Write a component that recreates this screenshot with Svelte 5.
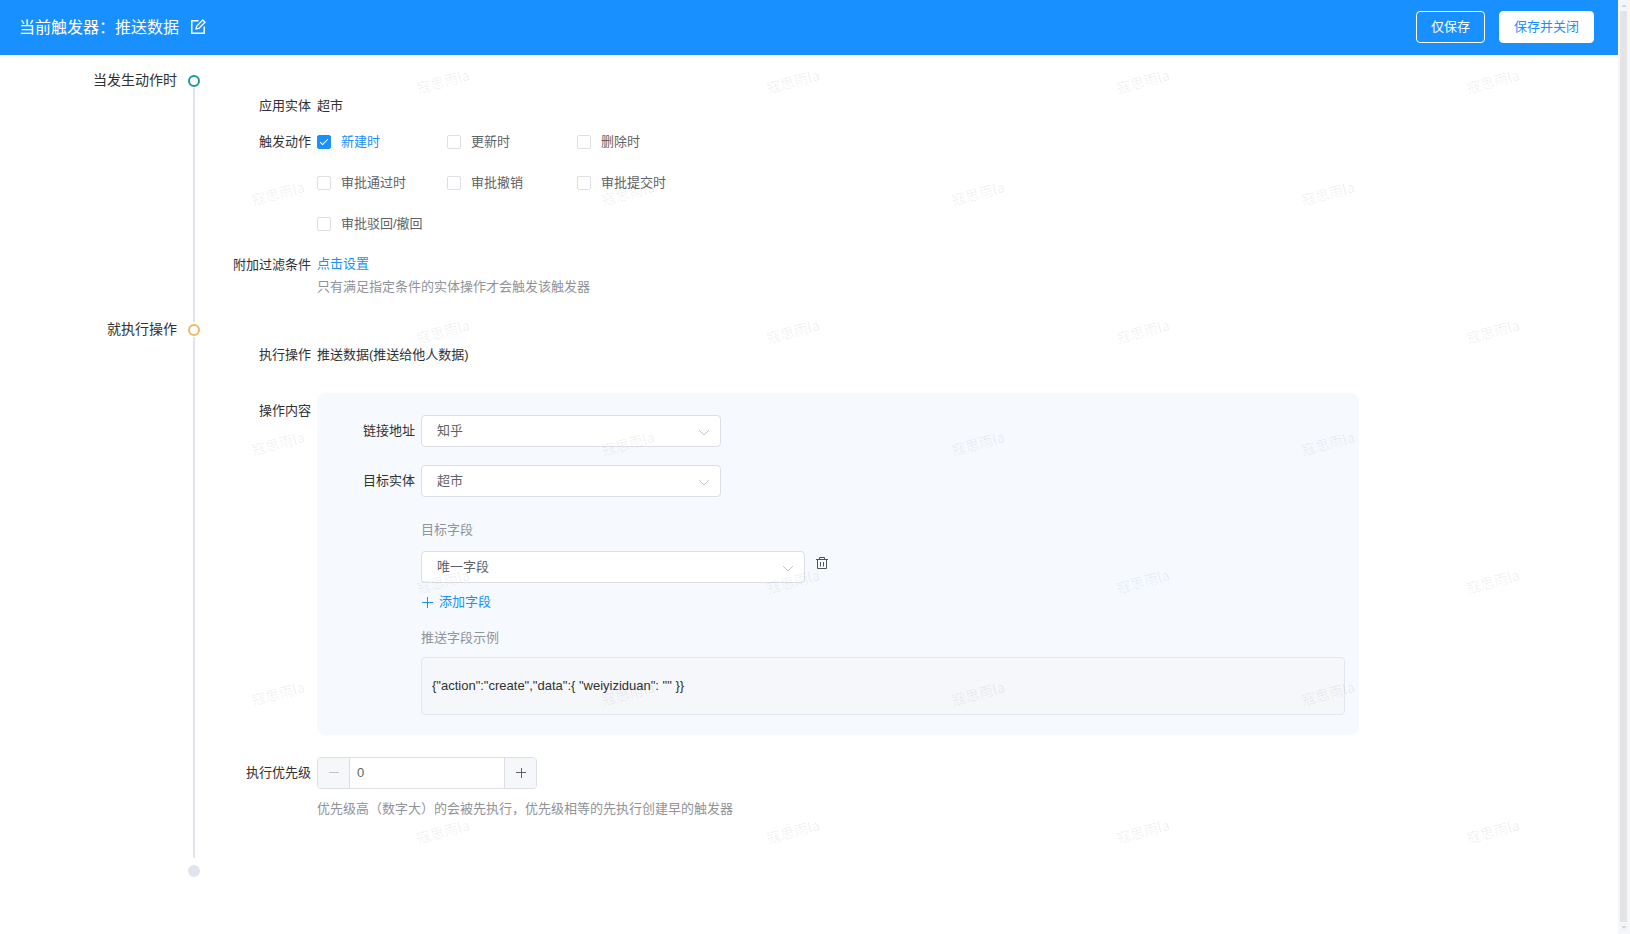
<script>
  let triggerName = "推送数据";
  let priority = 0;
  let linkUrl = "知乎";
  let targetEntity = "超市";
  let targetField = "唯一字段";

  let actions = [
    { label: "新建时", checked: true },
    { label: "更新时", checked: false },
    { label: "删除时", checked: false },
    { label: "审批通过时", checked: false },
    { label: "审批撤销", checked: false },
    { label: "审批提交时", checked: false },
    { label: "审批驳回/撤回", checked: false }
  ];

  // staggered marks, repeated every 350x250
  const marks = [];
  for (let row = 0; row < 7; row++) {
    const odd = row % 2;
    for (let col = 0; col < 4; col++) {
      marks.push({
        x: (odd ? 278 : 443) + col * 350,
        y: (odd ? 193 : 81) + Math.floor(row / 2) * 250
      });
    }
  }
</script>

<div class="page">
  <div class="content">
    <header class="header">
      <h1 class="title">当前触发器：{triggerName}</h1>
      <button class="icon-button edit" aria-label="编辑名称">
        <svg width="16" height="16" viewBox="0 0 16 16" fill="none" stroke="currentColor" stroke-width="1.5">
          <path d="M8.500 1.750H1.750v12.500h12.500V7.500" />
          <path d="M6 10l.6-2.800L12.800 1l2.200 2.200-6.200 6.200z" stroke-width="1.300" />
        </svg>
      </button>
      <div class="header-actions">
        <button class="button outline">仅保存</button>
        <button class="button">保存并关闭</button>
      </div>
    </header>

    <main class="steps">
      <section class="step">
        <h2 class="step-title">当发生动作时</h2>
        <div class="rail"><span class="dot teal"></span><span class="line"></span></div>
        <div class="step-body">
          <div class="row entity">
            <span class="label">应用实体</span>
            <span class="value">超市</span>
          </div>
          <div class="row actions" role="group" aria-labelledby="actions-label">
            <span class="label" id="actions-label">触发动作</span>
            <div class="checks">
              {#each actions as action}
                <label class="check">
                  <input type="checkbox" bind:checked={action.checked} />
                  <span>{action.label}</span>
                </label>
              {/each}
            </div>
          </div>
          <div class="row">
            <span class="label">附加过滤条件</span>
            <div>
              <a class="link filter" href="#filter">点击设置</a>
              <p class="hint">只有满足指定条件的实体操作才会触发该触发器</p>
            </div>
          </div>
        </div>
      </section>

      <section class="step">
        <h2 class="step-title">就执行操作</h2>
        <div class="rail"><span class="dot orange"></span><span class="line"></span></div>
        <div class="step-body last">
          <div class="row operation">
            <span class="label">执行操作</span>
            <span class="value">推送数据(推送给他人数据)</span>
          </div>
          <div class="row operation">
            <span class="label panel-label">操作内容</span>
            <div class="panel">
              <div class="row field">
                <label class="label" for="link-url">链接地址</label>
                <div class="select">
                  <select id="link-url" bind:value={linkUrl}>
                    <option>知乎</option>
                  </select>
                  <svg width="12" height="12" viewBox="0 0 12 12"><path d="M1 3l5 5 5-5" /></svg>
                </div>
              </div>
              <div class="row field">
                <label class="label" for="target-entity">目标实体</label>
                <div class="select">
                  <select id="target-entity" bind:value={targetEntity}>
                    <option>超市</option>
                  </select>
                  <svg width="12" height="12" viewBox="0 0 12 12"><path d="M1 3l5 5 5-5" /></svg>
                </div>
              </div>
              <div class="target">
                <label class="caption" for="target-field">目标字段</label>
                <div class="target-row">
                  <div class="select wide">
                    <select id="target-field" bind:value={targetField}>
                      <option>唯一字段</option>
                    </select>
                    <svg width="12" height="12" viewBox="0 0 12 12"><path d="M1 3l5 5 5-5" /></svg>
                  </div>
                  <button class="icon-button trash" aria-label="删除字段">
                    <svg width="12" height="13" viewBox="0 0 12 13" fill="none" stroke="currentColor">
                      <path d="M0 2.500h12M3.500 2.500v-2h5v2M1.500 2.500v9h9v-9M4.500 5v4.500M7.500 5v4.500" />
                    </svg>
                  </button>
                </div>
                <a class="link add" href="#add">
                  <svg width="12" height="12" viewBox="0 0 12 12" fill="none" stroke="currentColor"><path d="M1 6.500h11M6.500 1v11" /></svg>
                  添加字段
                </a>
                <p class="caption">推送字段示例</p>
                <pre class="example">{'{"action":"create","data":{ "weiyiziduan": "" }}'}</pre>
              </div>
            </div>
          </div>
          <div class="row">
            <label class="label" for="priority">执行优先级</label>
            <div>
              <div class="number">
                <button disabled={priority <= 0} on:click={() => priority--} aria-label="减少">
                  <svg width="12" height="12" viewBox="0 0 12 12"><path d="M1 5.500h10" /></svg>
                </button>
                <input id="priority" type="text" bind:value={priority} />
                <button on:click={() => priority++} aria-label="增加">
                  <svg width="12" height="12" viewBox="0 0 12 12"><path d="M1 5.500h10M6.500 1v10" /></svg>
                </button>
              </div>
              <p class="hint priority-hint">优先级高（数字大）的会被先执行，优先级相等的先执行创建早的触发器</p>
            </div>
          </div>
        </div>
      </section>

      <div class="step step-end">
        <span></span>
        <div class="rail"><span class="dot end"></span></div>
      </div>
    </main>
  </div>

  <div class="scrollbar">
    <svg width="6" height="3" viewBox="0 0 6 3"><path d="M0 3l3-3 3 3z" /></svg>
    <div class="thumb"></div>
    <svg width="6" height="3" viewBox="0 0 6 3"><path d="M0 0l3 3 3-3z" /></svg>
  </div>

  <div class="watermark" aria-hidden="true">
    {#each marks as mark}
      <span style="left: {mark.x}px; top: {mark.y}px">寇思雨la</span>
    {/each}
  </div>
</div>

<style>
  :global(body) {
    margin: 0;
    background: #fff;
  }
  .page {
    position: relative;
    display: flex;
    min-height: 100vh;
    font-family: "Liberation Sans", "Noto Sans CJK SC", sans-serif;
    font-size: 13px;
    color: #303133;
  }
  .page * {
    box-sizing: border-box;
  }
  .content {
    flex: 1;
    min-width: 0;
  }
  button,
  input,
  select {
    font: inherit;
    color: inherit;
  }
  p,
  pre,
  h1,
  h2 {
    margin: 0;
    font-weight: normal;
  }

  .header {
    display: flex;
    align-items: center;
    height: 55px;
    padding: 0 24px 2px 19px;
    background: #1890ff;
    color: #fff;
  }
  .title {
    padding-top: 2px;
    font-size: 16px;
    line-height: 24px;
  }
  .icon-button {
    display: flex;
    padding: 0;
    border: none;
    background: none;
    cursor: pointer;
  }
  .edit {
    margin-left: 11px;
  }
  .header-actions {
    display: flex;
    gap: 14px;
    margin-left: auto;
  }
  .button {
    height: 32px;
    padding: 0 14px 2px;
    border: 1px solid #fff;
    border-radius: 4px;
    background: #fff;
    color: #1890ff;
    cursor: pointer;
  }
  .button.outline {
    background: none;
    color: #fff;
  }

  .steps {
    padding: 20px 16% 0 0;
  }
  .step {
    display: grid;
    grid-template-columns: 177px 12px 1fr;
    column-gap: 11px;
  }
  .step-title {
    font-size: 14px;
    line-height: 10px;
    text-align: right;
  }
  .rail {
    display: flex;
    flex-direction: column;
    align-items: center;
  }
  .dot {
    width: 12px;
    height: 12px;
    border: 2px solid;
    border-radius: 50%;
  }
  .teal {
    border-color: #1a9a9a;
  }
  .orange {
    border-color: #f0b866;
  }
  .end {
    border-color: #dfe4ed;
    background: #dfe4ed;
  }
  .line {
    flex: 1;
    width: 2px;
    margin: 1px 0 2px;
    background: #dfe4ed;
  }
  .step-body {
    padding: 15px 0 29px;
    min-width: 0;
  }
  .step-body.last {
    padding-bottom: 43px;
  }
  .step-end {
    margin-top: 5px;
  }

  .row {
    display: flex;
  }
  .row > :last-child {
    min-width: 0;
  }
  .label {
    flex: none;
    width: 106px;
    padding-right: 6px;
    line-height: 32px;
    text-align: right;
  }
  .value {
    line-height: 32px;
  }
  .entity {
    margin-bottom: 4px;
  }
  .actions {
    margin-bottom: 9px;
  }
  .checks {
    display: grid;
    grid-template-columns: repeat(3, 130px);
    row-gap: 9px;
  }
  .check {
    display: flex;
    align-items: center;
    gap: 10px;
    line-height: 32px;
    color: #606266;
    cursor: pointer;
  }
  .check input {
    appearance: none;
    position: relative;
    width: 14px;
    height: 14px;
    margin: 0;
    border: 1px solid #dcdfe6;
    border-radius: 2px;
    background: #fff;
  }
  .check input:checked {
    border-color: #1890ff;
    background: #1890ff;
  }
  .check input:checked::after {
    content: "";
    position: absolute;
    left: 4px;
    top: 1px;
    width: 3px;
    height: 7px;
    border: solid #fff;
    border-width: 0 1px 1px 0;
    box-sizing: content-box;
    transform: rotate(45deg);
  }
  .check input:checked + span {
    color: #1890ff;
  }
  .link {
    color: #1890ff;
    text-decoration: none;
  }
  .filter {
    display: block;
    line-height: 30px;
  }
  .hint {
    line-height: 16px;
    color: #909399;
  }
  .priority-hint {
    margin-top: 12px;
  }

  .operation {
    margin-bottom: 22px;
  }
  .panel-label {
    line-height: 36px;
  }
  .panel {
    flex: 1;
    padding: 22px 14px 20px 0;
    border-radius: 8px;
    background: #f6faff;
  }
  .panel .label {
    width: 104px;
  }
  .field {
    margin-bottom: 18px;
  }
  .select {
    position: relative;
    width: 300px;
    height: 32px;
  }
  .select.wide {
    width: 384px;
  }
  .select select {
    appearance: none;
    width: 100%;
    height: 32px;
    padding: 0 30px 2px 15px;
    border: 1px solid #dcdfe6;
    border-radius: 4px;
    background: #fff;
    color: #606266;
  }
  .select svg {
    position: absolute;
    right: 11px;
    top: 12px;
    fill: none;
    stroke: #c0c4cc;
    pointer-events: none;
  }
  .target {
    margin: 23px 0 0 104px;
  }
  .caption {
    display: block;
    line-height: 20px;
    color: #909399;
  }
  .target-row {
    display: flex;
    gap: 11px;
    margin: 11px 0 9px;
  }
  .trash {
    align-self: flex-start;
    padding-top: 6px;
    color: #505255;
  }
  .add {
    display: flex;
    align-items: center;
    gap: 6px;
    width: max-content;
    margin-bottom: 16px;
    line-height: 20px;
  }
  .example {
    margin-top: 9px;
    padding: 18px 10px;
    border: 1px solid #e4e7ed;
    border-radius: 4px;
    background: #f5f7fa;
    font-family: inherit;
    line-height: 20px;
    white-space: pre-wrap;
  }

  .number {
    display: flex;
    width: 220px;
    height: 32px;
    border: 1px solid #dcdfe6;
    border-radius: 4px;
    overflow: hidden;
  }
  .number button {
    display: flex;
    flex: none;
    align-items: center;
    justify-content: center;
    width: 31px;
    padding: 0;
    border: none;
    background: #f5f7fa;
    cursor: pointer;
  }
  .number svg {
    stroke: #606266;
  }
  .number button:disabled svg {
    stroke: #c0c4cc;
  }
  .number input {
    flex: 1;
    min-width: 0;
    padding: 0 7px 2px;
    border: solid #dcdfe6;
    border-width: 0 1px;
    color: #606266;
  }

  .scrollbar {
    position: sticky;
    top: 0;
    display: flex;
    flex-direction: column;
    align-items: center;
    gap: 4px;
    width: 12px;
    height: 100vh;
    padding: 4px 1px 5px 0;
    background: #f5f6f9;
  }
  .scrollbar svg {
    fill: #d5d7db;
  }
  .thumb {
    flex: 1;
    width: 7px;
    background: #e4e4e4;
  }

  .watermark {
    position: absolute;
    inset: 0;
    overflow: hidden;
    pointer-events: none;
  }
  .watermark span {
    position: absolute;
    font-family: "Noto Sans CJK SC", sans-serif;
    font-size: 14px;
    white-space: nowrap;
    color: rgba(0, 0, 0, 0.07);
    transform: translate(-50%, -50%) rotate(-15deg);
  }
</style>
